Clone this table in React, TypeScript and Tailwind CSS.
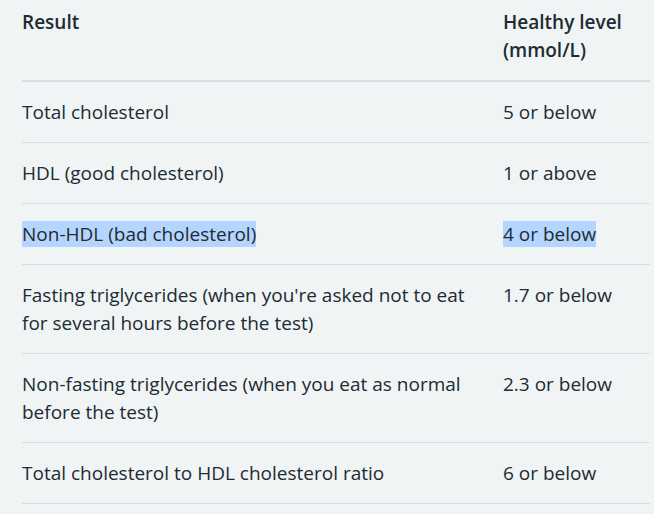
const rows: { result: string; level: string; selected?: boolean }[] = [
  { result: "Total cholesterol", level: "5 or below" },
  { result: "HDL (good cholesterol)", level: "1 or above" },
  { result: "Non-HDL (bad cholesterol)", level: "4 or below", selected: true },
  {
    result: "Fasting triglycerides (when you're asked not to eat for several hours before the test)",
    level: "1.7 or below",
  },
  {
    result: "Non-fasting triglycerides (when you eat as normal before the test)",
    level: "2.3 or below",
  },
  { result: "Total cholesterol to HDL cholesterol ratio", level: "6 or below" },
];

const App = () => {
  return (
    <div
      className="min-h-screen w-[654px] bg-[#f0f4f5] text-[#212b32] pl-[22px] pr-1"
      style={{ fontFamily: '"Open Sans", "Noto Sans", sans-serif' }}
    >
      {/* Header */}
      <div className="grid grid-cols-[481px_1fr] border-b-2 border-[#d8dde0] pt-[8px] pb-[16px] text-[19px] leading-[28px] font-semibold">
        <div>Result</div>
        <div>
          Healthy level
          <br />
          (mmol/L)
        </div>
      </div>

      {/* Rows */}
      {rows.map((row) => (
        <div
          key={row.result}
          className="grid grid-cols-[481px_1fr] border-b border-[#d8dde0] py-4 text-[19px] leading-[28px]"
        >
          <div className="pr-6">
            {row.selected ? <span className="bg-[#b4d5fe]">{row.result}</span> : row.result}
          </div>
          <div>
            {row.selected ? <span className="bg-[#b4d5fe]">{row.level}</span> : row.level}
          </div>
        </div>
      ))}
    </div>
  );
};

export default App;
